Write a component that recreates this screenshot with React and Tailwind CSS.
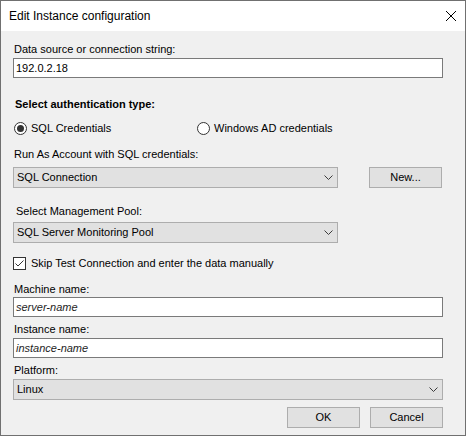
import React from 'react';

// Small chevron used inside the combo boxes
const Chevron = () => (
  <svg width="9" height="5" viewBox="0 0 9 5" className="shrink-0">
    <path d="M0.5 0.5 L4.5 4.5 L8.5 0.5" fill="none" stroke="#3c3c3c" strokeWidth="1" />
  </svg>
);

const Label = ({ children, className = '' }) => (
  <div className={`h-[13px] leading-[13px] text-[11px] text-black ${className}`}>{children}</div>
);

const TextBox = ({ value, italic }) => (
  <div className="h-[20px] w-[430px] bg-white border border-[#7a7a7a] flex items-center pl-[2px]">
    <span className={`text-[11px] leading-[13px] ${italic ? 'italic text-[#1e1e1e]' : 'text-black'}`}>{value}</span>
  </div>
);

const ComboBox = ({ value, width }) => (
  <div className={`h-[21px] ${width} bg-[#e1e1e1] border border-[#adadad] flex items-center justify-between pl-[3px] pr-[4px]`}>
    <span className="text-[11px] leading-[13px] text-black">{value}</span>
    <Chevron />
  </div>
);

const Button = ({ children }) => (
  <div className="h-[21px] w-[73px] bg-[#e1e1e1] border border-[#adadad] flex items-center justify-center text-[11px] leading-[13px] text-black">
    {children}
  </div>
);

const Radio = ({ checked, label }) => (
  <div className="flex items-center h-[13px]">
    <div className="w-[13px] h-[13px] rounded-full border border-[#333333] bg-white flex items-center justify-center">
      {checked && <div className="w-[7px] h-[7px] rounded-full bg-[#333333]"></div>}
    </div>
    <span className="ml-[4px] text-[11px] leading-[13px] text-black">{label}</span>
  </div>
);

export default function App() {
  return (
    <div className="w-[466px] h-[436px] border border-[#707070] bg-[#f0f0f0] flex flex-col font-['Liberation_Sans',Arial,sans-serif]">
      {/* title bar */}
      <div className="h-[30px] bg-white flex items-center justify-between pl-[8px] pr-[9px]">
        <span className="text-[12px] leading-[14px] text-black">Edit Instance configuration</span>
        <svg width="10" height="10" viewBox="0 0 10 10">
          <path d="M0 0 L10 10 M10 0 L0 10" stroke="#000" strokeWidth="1" />
        </svg>
      </div>

      <div className="flex flex-col pl-[12px]">
        <Label className="mt-[12px] pl-[1px]">Data source or connection string:</Label>
        <div className="mt-[2px]">
          <TextBox value="192.0.2.18" />
        </div>

        <Label className="mt-[20px] pl-[2px] font-bold">Select authentication type:</Label>
        <div className="mt-[11px] flex pl-[1px]">
          <div className="w-[183px]">
            <Radio checked label="SQL Credentials" />
          </div>
          <Radio label="Windows AD credentials" />
        </div>

        <Label className="mt-[13px] pl-[1px]">Run As Account with SQL credentials:</Label>
        <div className="mt-[6px] flex gap-[31px]">
          <ComboBox value="SQL Connection" width="w-[325px]" />
          <Button>New...</Button>
        </div>

        <Label className="mt-[17px] pl-[3px]">Select Management Pool:</Label>
        <div className="mt-[4px]">
          <ComboBox value="SQL Server Monitoring Pool" width="w-[325px]" />
        </div>

        <div className="mt-[14px] flex items-center h-[13px]">
          <div className="w-[13px] h-[13px] border border-[#333333] bg-white flex items-center justify-center">
            <svg width="11" height="11" viewBox="0 0 11 11">
              <path d="M1.5 5.5 L4 8 L9.5 2.5" fill="none" stroke="#333333" strokeWidth="1" />
            </svg>
          </div>
          <span className="ml-[5px] text-[11px] leading-[13px] text-black">Skip Test Connection and enter the data manually</span>
        </div>

        <Label className="mt-[13px] pl-[1px]">Machine name:</Label>
        <div className="mt-[1px]">
          <TextBox value="server-name" italic />
        </div>

        <Label className="mt-[6px] pl-[1px]">Instance name:</Label>
        <div className="mt-[2px]">
          <TextBox value="instance-name" italic />
        </div>

        <Label className="mt-[6px] pl-[1px]">Platform:</Label>
        <div className="mt-[2px]">
          <ComboBox value="Linux" width="w-[430px]" />
        </div>

        <div className="mt-[7px] w-[430px] flex justify-end gap-[10px]">
          <Button>OK</Button>
          <Button>Cancel</Button>
        </div>
      </div>
    </div>
  );
}
